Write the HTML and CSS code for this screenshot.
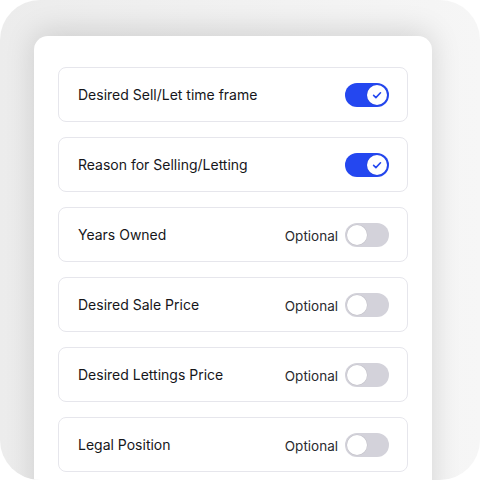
FILE: index.html
```html
<!DOCTYPE html>
<html lang="en">
<head>
    <meta charset="UTF-8">
    <meta name="viewport" content="width=device-width, initial-scale=1.0">
    <title>Property details</title>
    <link rel="stylesheet" href="styles.css">
</head>
<body>
    <div class="frame">
        <div class="card">
            <div class="row">
                <span class="label">Desired Sell/Let time frame</span>
                <div class="side">
                    <span class="toggle on"><span class="knob"><svg viewBox="0 0 20 20" width="20" height="20"><path d="M6.6 10.4l2.3 2.2 4.6-4.8" fill="none" stroke="#2447f0" stroke-width="1.6" stroke-linecap="round" stroke-linejoin="round"/></svg></span></span>
                </div>
            </div>
            <div class="row">
                <span class="label">Reason for Selling/Letting</span>
                <div class="side">
                    <span class="toggle on"><span class="knob"><svg viewBox="0 0 20 20" width="20" height="20"><path d="M6.6 10.4l2.3 2.2 4.6-4.8" fill="none" stroke="#2447f0" stroke-width="1.6" stroke-linecap="round" stroke-linejoin="round"/></svg></span></span>
                </div>
            </div>
            <div class="row">
                <span class="label">Years Owned</span>
                <div class="side">
                    <span class="optional">Optional</span>
                    <span class="toggle"><span class="knob"></span></span>
                </div>
            </div>
            <div class="row">
                <span class="label">Desired Sale Price</span>
                <div class="side">
                    <span class="optional">Optional</span>
                    <span class="toggle"><span class="knob"></span></span>
                </div>
            </div>
            <div class="row">
                <span class="label">Desired Lettings Price</span>
                <div class="side">
                    <span class="optional">Optional</span>
                    <span class="toggle"><span class="knob"></span></span>
                </div>
            </div>
            <div class="row">
                <span class="label">Legal Position</span>
                <div class="side">
                    <span class="optional">Optional</span>
                    <span class="toggle"><span class="knob"></span></span>
                </div>
            </div>
        </div>
    </div>
</body>
</html>
```

FILE: styles.css
```css
* {
    margin: 0;
    padding: 0;
    box-sizing: border-box;
    font-family: 'Inter', 'Liberation Sans', sans-serif;
}

body {
    background: #ffffff;
}

.frame {
    width: 480px;
    height: 480px;
    border-radius: 40px;
    background: linear-gradient(90deg, #ececec 0%, #f2f2f2 60%, #f6f6f6 100%);
    overflow: hidden;
    padding: 36px 0 0 34px;
}

.card {
    width: 398px;
    height: 480px;
    background: #ffffff;
    border-radius: 14px;
    padding: 31px 24px;
    display: flex;
    flex-direction: column;
    gap: 15px;
    box-shadow: 0 -4px 30px rgba(0, 0, 0, 0.14);
}

.row {
    height: 55px;
    border: 1px solid #e6e6ec;
    border-radius: 8px;
    padding: 0 18px 0 19px;
    display: flex;
    align-items: center;
    justify-content: space-between;
}

.label {
    font-size: 14px;
    color: #16161a;
    margin-top: -1px;
}

.side {
    display: flex;
    align-items: center;
    gap: 7px;
}

.optional {
    font-size: 13.5px;
    color: #2a2a2f;
    margin-top: 3px;
}

.toggle {
    width: 44px;
    height: 24px;
    border-radius: 12px;
    background: #d3d2da;
    display: flex;
    align-items: center;
    padding: 2px;
    margin-top: 1px;
}

.toggle.on {
    background: #2447f0;
    justify-content: flex-end;
    margin-top: 0;
}

.knob {
    width: 20px;
    height: 20px;
    border-radius: 50%;
    background: #ffffff;
    display: flex;
    box-shadow: 0 0 0 0.5px rgba(0, 0, 0, 0.08);
}
```
